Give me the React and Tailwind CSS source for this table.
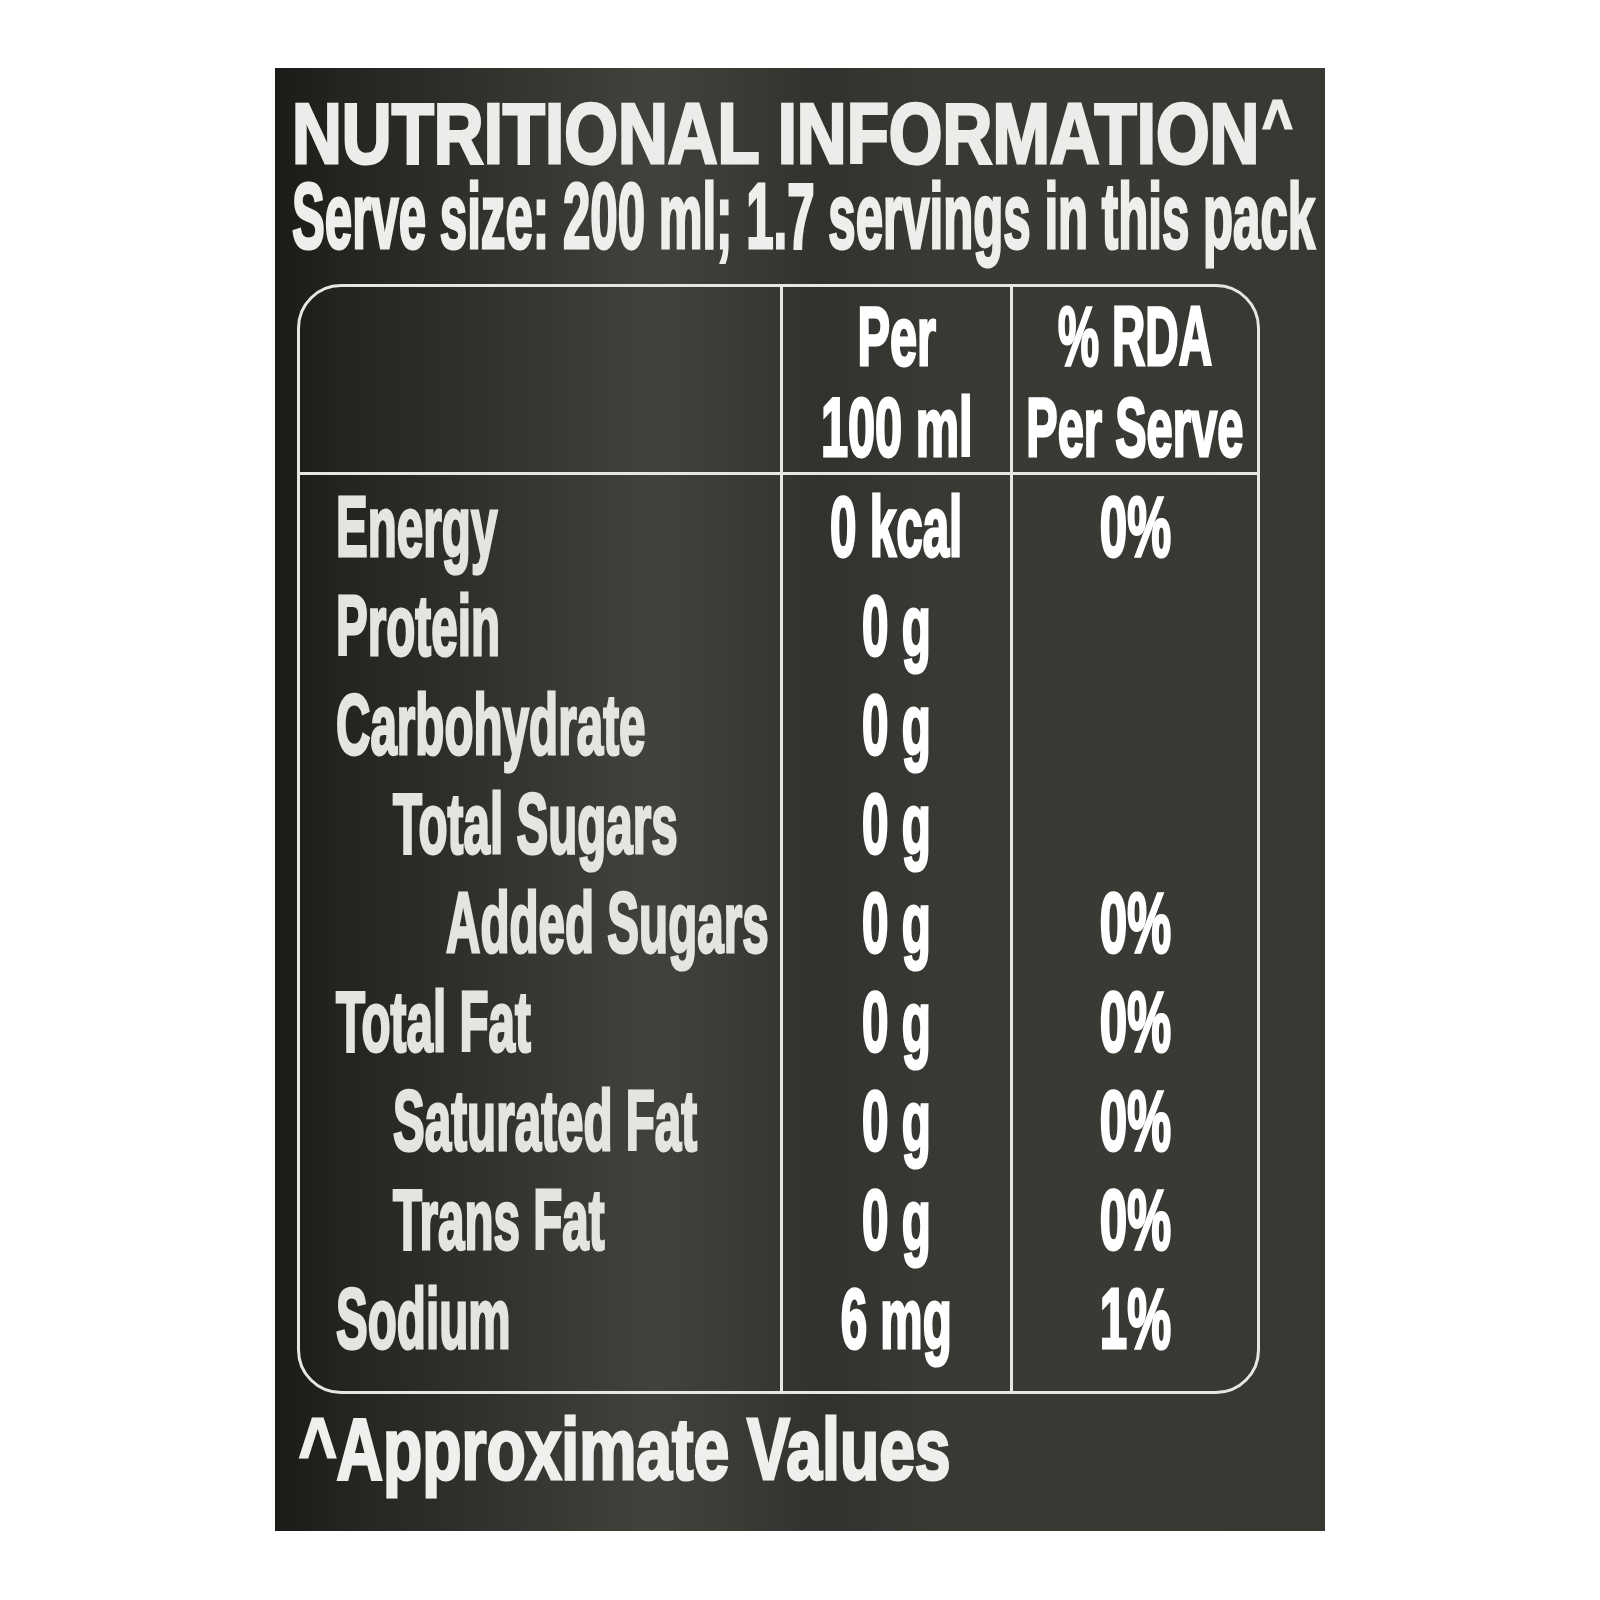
const rows = [
  { label: "Energy", indent: "pl-[36px]", value: "0 kcal", rda: "0%" },
  { label: "Protein", indent: "pl-[36px]", value: "0 g", rda: "" },
  { label: "Carbohydrate", indent: "pl-[36px]", value: "0 g", rda: "" },
  { label: "Total Sugars", indent: "pl-[93px]", value: "0 g", rda: "" },
  { label: "Added Sugars", indent: "pl-[146px]", value: "0 g", rda: "0%" },
  { label: "Total Fat", indent: "pl-[36px]", value: "0 g", rda: "0%" },
  { label: "Saturated Fat", indent: "pl-[93px]", value: "0 g", rda: "0%" },
  { label: "Trans Fat", indent: "pl-[93px]", value: "0 g", rda: "0%" },
  { label: "Sodium", indent: "pl-[36px]", value: "6 mg", rda: "1%" },
];

const font = "font-['Liberation_Sans',Arial,sans-serif] font-bold";
const stroke = "[-webkit-text-stroke:3px_currentColor]";

const App = () => {
  return (
    <div className="min-h-[1600px] w-full bg-white pl-[275px] pt-[68px]">
      <div
        className={`flex h-[1463px] w-[1050px] flex-col bg-[linear-gradient(90deg,#1b1a17_0%,#24231f_6%,#2e2d29_16%,#3a3934_28%,#43413c_36%,#3c3a35_44%,#32312d_52%,#3a3833_62%,#3b3934_80%,#393732_100%)] ${font}`}
      >
        <div className="pl-[17px] pt-[23px]">
          <div className={`w-max origin-left scale-x-[0.812] whitespace-nowrap text-[85px] leading-[85px] text-[#ececea] ${stroke}`}>
            NUTRITIONAL INFORMATION
            <span className="ml-[4px] align-top text-[62px] leading-[62px]">^</span>
          </div>
          <div className={`w-max origin-left scale-x-[0.535] whitespace-nowrap text-[92px] leading-[80px] text-[#eeeeec] ${stroke}`}>
            Serve size: 200 ml; 1.7 servings in this pack
          </div>
        </div>

        <div className="ml-[22px] mt-[28px] flex h-[1110px] w-[963px] flex-col overflow-hidden rounded-[44px] border-[3px] border-[#e6e6e3]">
          <div className="grid h-[188px] grid-cols-[483px_230px_minmax(0,1fr)] border-b-[3px] border-[#e6e6e3]">
            <div className="border-r-[3px] border-[#e6e6e3]" />
            <div className="flex min-w-0 flex-col items-center border-r-[3px] border-[#e6e6e3] pt-[4px] text-white">
              <span className={`scale-x-[0.58] whitespace-nowrap text-[84px] leading-[91px] ${stroke}`}>Per</span>
              <span className={`scale-x-[0.58] whitespace-nowrap text-[84px] leading-[91px] ${stroke}`}>100 ml</span>
            </div>
            <div className="flex min-w-0 flex-col items-center pt-[4px] text-white">
              <span className={`scale-x-[0.55] whitespace-nowrap text-[84px] leading-[91px] ${stroke}`}>% RDA</span>
              <span className={`scale-x-[0.56] whitespace-nowrap text-[84px] leading-[91px] ${stroke}`}>Per Serve</span>
            </div>
          </div>

          <div className="flex flex-1">
            <div className="w-[483px] border-r-[3px] border-[#e6e6e3] pt-[2px] text-[#e4e4e1]">
              {rows.map((row) => (
                <div key={row.label} className={`h-[99px] ${row.indent}`}>
                  <div className={`w-max origin-left scale-x-[0.56] whitespace-nowrap text-[85px] leading-[99px] ${stroke}`}>
                    {row.label}
                  </div>
                </div>
              ))}
            </div>
            <div className="w-[230px] border-r-[3px] border-[#e6e6e3] pt-[2px] text-white">
              {rows.map((row) => (
                <div key={row.label} className="flex h-[99px] justify-center">
                  <span className={`scale-x-[0.56] whitespace-nowrap text-[85px] leading-[99px] ${stroke}`}>{row.value}</span>
                </div>
              ))}
            </div>
            <div className="min-w-0 flex-1 pt-[2px] text-white">
              {rows.map((row) => (
                <div key={row.label} className="flex h-[99px] justify-center">
                  <span className={`scale-x-[0.58] whitespace-nowrap text-[85px] leading-[99px] ${stroke}`}>{row.rda}</span>
                </div>
              ))}
            </div>
          </div>
        </div>

        <div className="mt-[11px] pl-[24px]">
          <div className={`w-max origin-left scale-x-[0.73] whitespace-nowrap text-[88px] leading-[88px] text-[#efefed] ${stroke}`}>
            ^Approximate Values
          </div>
        </div>
      </div>
    </div>
  );
};

export default App;
